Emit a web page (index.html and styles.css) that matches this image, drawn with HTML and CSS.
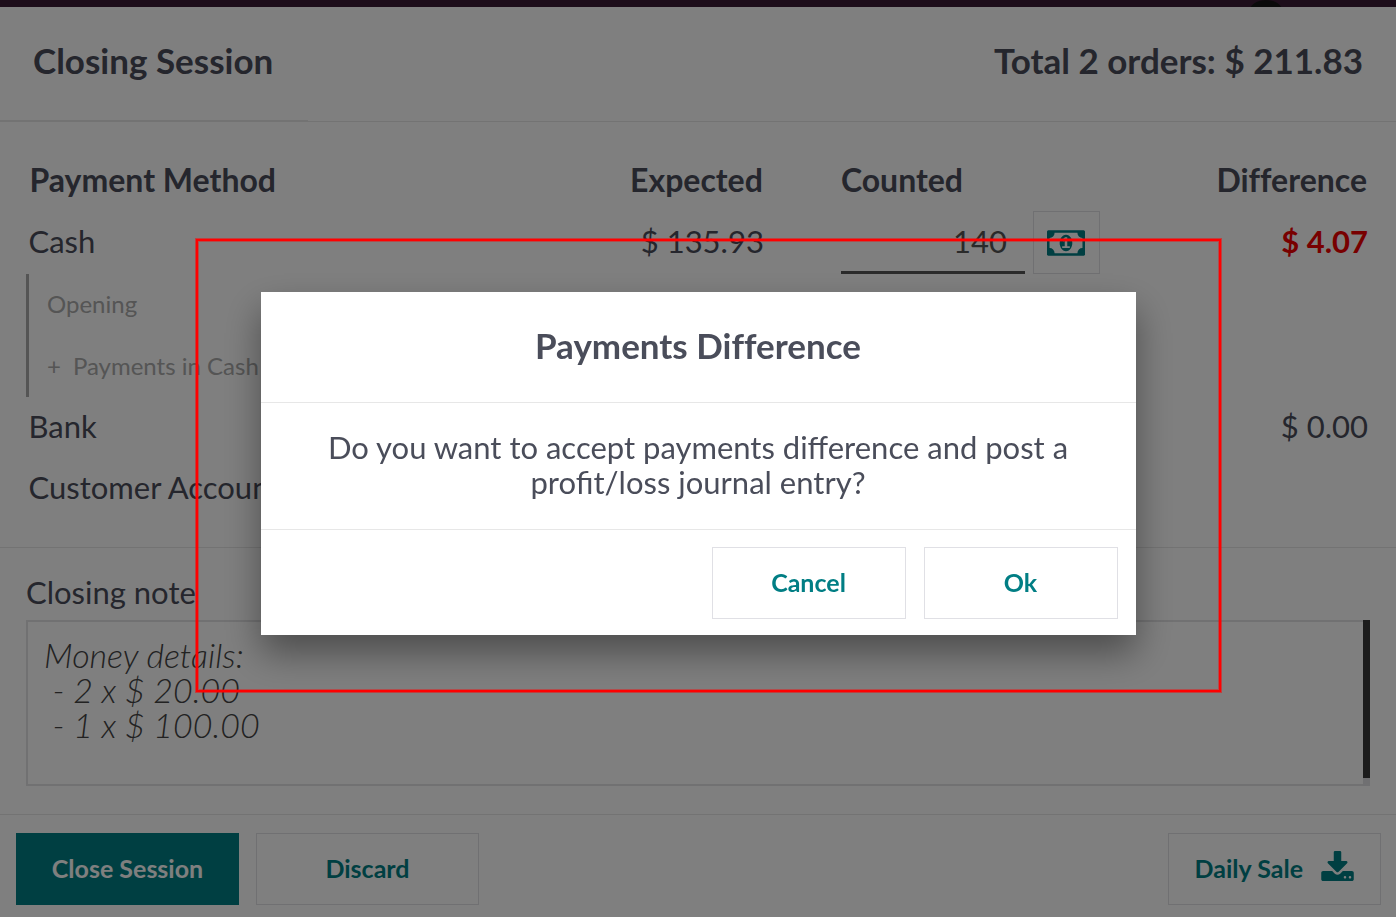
FILE: index.html
```html
<!DOCTYPE html>
<html lang="en">
<head>
<meta charset="utf-8">
<meta name="viewport" content="width=device-width, initial-scale=1">
<title>Closing Session</title>
<link rel="stylesheet" href="styles.css">
</head>
<body>
<div class="app">
  <div class="topbar"><span class="mascot"></span></div>
  <header class="session-header">
    <h1 class="title">Closing Session</h1>
    <h1 class="title">Total 2 orders: $ 211.83</h1>
  </header>
  <main class="session-body">
    <section class="payments">
      <table class="payment-table">
        <thead>
          <tr>
            <th class="col-method" scope="col">Payment Method</th>
            <th class="col-expected" scope="col">Expected</th>
            <th class="col-counted" scope="col">Counted</th>
            <th class="col-difference" scope="col">Difference</th>
          </tr>
        </thead>
        <tbody>
          <tr>
            <td>Cash</td>
            <td class="col-expected">$ 135.93</td>
            <td class="col-counted">
              <div class="count-field">
                <input class="count-input" type="text" value="140" aria-label="Counted cash">
                <button class="button money-button" type="button" aria-label="Money details">
                  <svg class="money-icon" viewBox="0 256 1920 1280" aria-hidden="true"><path d="M768 1152h384v-96h-128v-448h-114l-148 137 77 80q42-37 55-57h2v288h-128v96zm512-256q0 70-21 142t-59.500 134-101.500 101-138 39-138-39-101.500-101-59.500-134-21-142 21-142 59.500-134 101.500-101 138-39 138 39 101.500 101 59.500 134 21 142zm512 256v-512q-106 0-181-75t-75-181h-1152q0 106-75 181t-181 75v512q106 0 181 75t75 181h1152q0-106 75-181t181-75zm128-832v1152q0 26-19 45t-45 19h-1792q-26 0-45-19t-19-45v-1152q0-26 19-45t45-19h1792q26 0 45 19t19 45z"/></svg>
                </button>
              </div>
            </td>
            <td class="col-difference warning">$ 4.07</td>
          </tr>
          <tr class="detail"><td colspan="4">Opening</td></tr>
          <tr class="detail"><td colspan="4"><span class="sign">+</span>Payments in Cash</td></tr>
          <tr>
            <td>Bank</td>
            <td></td>
            <td></td>
            <td class="col-difference">$ 0.00</td>
          </tr>
          <tr>
            <td>Customer Account</td>
            <td></td>
            <td></td>
            <td></td>
          </tr>
        </tbody>
      </table>
    </section>
    <section class="notes">
      <label class="notes-label" for="closing-note">Closing note</label>
      <div class="notes-box">
        <textarea class="notes-input" id="closing-note">Money details:
 - 2 x $ 20.00
 - 1 x $ 100.00</textarea>
        <div class="scroll-track"><div class="scroll-thumb"></div></div>
      </div>
    </section>
  </main>
  <footer class="session-footer">
    <button class="button primary wide" type="button">Close Session</button>
    <button class="button wide" type="button">Discard</button>
    <button class="button download" type="button">Daily Sale
      <svg class="download-icon" viewBox="0 0 1664 1536" aria-hidden="true"><path d="M1280 1344q0-26-19-45t-45-19-45 19-19 45 19 45 45 19 45-19 19-45zm256 0q0-26-19-45t-45-19-45 19-19 45 19 45 45 19 45-19 19-45zm128-224v320q0 40-28 68t-68 28h-1472q-40 0-68-28t-28-68v-320q0-40 28-68t68-28h465l135 136q58 56 136 56t136-56l136-136h464q40 0 68 28t28 68zm-325-569q17 41-14 70l-448 448q-18 19-45 19t-45-19l-448-448q-31-29-14-70 17-39 59-39h256v-448q0-26 19-45t45-19h256q26 0 45 19t19 45v448h256q42 0 59 39z"/></svg>
    </button>
  </footer>
</div>
<div class="backdrop">
  <div class="highlight"></div>
  <div class="dialog" role="dialog" aria-modal="true" aria-labelledby="dialog-title">
    <h2 class="dialog-title" id="dialog-title">Payments Difference</h2>
    <p class="dialog-text">Do you want to accept payments difference and post a profit/loss journal entry?</p>
    <div class="dialog-actions">
      <button class="button dialog-button" type="button">Cancel</button>
      <button class="button dialog-button" type="button">Ok</button>
    </div>
  </div>
</div>
</body>
</html>
```
FILE: styles.css
```css
* {
  box-sizing: border-box;
}

body {
  margin: 0;
  background: #fff;
  color: #4a4d5a;
  font-family: Lato, "Open Sans", sans-serif;
  font-size: 31px;
  line-height: 35px;
}

.app {
  display: flex;
  flex-direction: column;
  min-height: 100vh;
}

.topbar {
  display: flex;
  justify-content: flex-end;
  height: 7px;
  padding-right: 114px;
  overflow: hidden;
  background: #3a1b34;
}

.mascot {
  width: 32px;
  height: 20px;
  border-radius: 50%;
  background: #151515;
}

.session-header {
  display: flex;
  justify-content: space-between;
  align-items: center;
  height: 115px;
  padding: 0 33px 8px;
  border-bottom: 1px solid #e7e7e7;
  background: linear-gradient(#e7e7e7, #e7e7e7) left bottom / 308px 1px no-repeat;
}

.title,
.dialog-title {
  margin: 0;
  font-size: 35px;
  font-weight: 700;
  font-variant-ligatures: none;
}

.session-body {
  flex: 1;
  display: flex;
  flex-direction: column;
}

.payments {
  padding: 28px 26px;
  border-bottom: 1px solid #e7e7e7;
}

.payment-table {
  width: 100%;
  table-layout: fixed;
  border-collapse: collapse;
}

.payment-table th,
.payment-table td {
  height: 61px;
  padding: 0 2px 2px 1px;
  text-align: left;
}

.payment-table th {
  padding: 0 3px 2px 2px;
  font-size: 32px;
  font-weight: 700;
  font-variant-ligatures: none;
}

.col-method {
  width: 40%;
}

.col-expected {
  width: 15%;
}

.col-counted {
  width: 28%;
}

.payment-table .col-expected,
.payment-table .col-difference {
  text-align: right;
}

.payment-table .col-counted {
  padding-left: 75px;
}

.payment-table td.col-counted {
  padding-bottom: 0;
}

.payment-table .warning {
  color: #f00000;
  font-weight: 700;
}

.count-field {
  display: flex;
  gap: 8px;
}

.count-input {
  width: 184px;
  height: 63px;
  padding: 0 18px 0 0;
  border: 0;
  border-bottom: 3px solid #555;
  background: transparent;
  color: #555;
  font: inherit;
  text-align: right;
}

.payment-table .detail td {
  padding-left: 18px;
  border-left: 3px solid #aaa;
  color: #aaa;
  font-size: 24px;
}

.payment-table .detail + .detail td {
  height: 62px;
}

.sign {
  margin-right: 12px;
}

.notes {
  flex: 1;
  display: flex;
  flex-direction: column;
  gap: 10px;
  padding: 27px 26px 28px;
}

.notes-box {
  position: relative;
  flex: 1;
  display: flex;
}

.notes-input {
  flex: 1;
  padding: 15px 16px;
  border: 2px solid #e3e3e5;
  background: transparent;
  color: #444;
  font: italic 300 34px/35px Lato, "Open Sans", sans-serif;
  resize: none;
}

.scroll-track {
  position: absolute;
  top: 0;
  right: 0;
  bottom: 0;
  width: 7px;
  background: #e0e0e4;
}

.scroll-thumb {
  height: 95%;
  background: #383838;
}

.session-footer {
  display: flex;
  gap: 17px;
  padding: 18px 15px 12px 16px;
  border-top: 1px solid #e7e7e7;
}

.button {
  display: flex;
  align-items: center;
  justify-content: center;
  height: 72px;
  padding: 0 26px 2px;
  border: 1px solid #e0e0e5;
  background: transparent;
  color: #017e84;
  font: 700 25px/35px Lato, "Open Sans", sans-serif;
}

.button svg {
  fill: currentColor;
}

.wide {
  width: 223px;
}

.primary {
  border-color: #017e84;
  background: #017e84;
  color: #fff;
}

.download {
  gap: 18px;
  margin-left: auto;
}

.download-icon {
  width: 33px;
  height: 30px;
  margin-bottom: 4px;
}

.money-button {
  width: 67px;
  height: 63px;
  padding: 0;
}

.money-icon {
  width: 38px;
  height: 26px;
}

.backdrop {
  position: fixed;
  inset: 0;
  display: flex;
  align-items: center;
  justify-content: center;
  padding-top: 10px;
  background: rgba(0, 0, 0, 0.5);
}

.highlight {
  position: absolute;
  inset: 239px 175px 225px 196px;
  border: 2px solid #f00;
  box-shadow: 0 0 0 1px rgba(255, 0, 0, 0.5), inset 0 0 0 1px rgba(255, 0, 0, 0.4);
}

.dialog {
  position: relative;
  width: 875px;
  max-width: 90%;
  background: #fff;
  box-shadow: 0 18px 35px rgba(0, 0, 0, 0.4);
  text-align: center;
}

.dialog-title {
  padding: 36px 18px 39px;
  border-bottom: 1px solid #e7e7e7;
}

.dialog-text {
  margin: 0;
  padding: 27px 53px 29px;
  border-bottom: 1px solid #e7e7e7;
}

.dialog-actions {
  display: flex;
  justify-content: flex-end;
  gap: 18px;
  padding: 17px 18px 16px;
}

.dialog-button {
  width: 194px;
}
```
